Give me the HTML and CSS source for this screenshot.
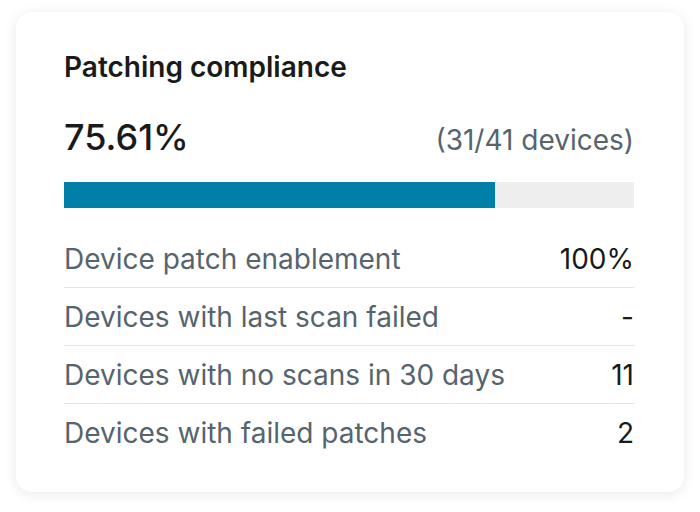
FILE: index.html
```html
<!DOCTYPE html>
<html lang="en">
<head>
  <meta charset="UTF-8">
  <title>Patching compliance</title>
  <link rel="stylesheet" href="styles.css">
</head>
<body>
  <div class="card">
    <h2 class="titulo">Patching compliance</h2>
    <div class="resumen">
      <span class="porcentaje">75.61%</span>
      <span class="dispositivos">(31/41 devices)</span>
    </div>
    <div class="barra"><div class="relleno" style="width: 75.61%"></div></div>
    <div class="filas">
      <div class="fila"><span>Device patch enablement</span><b>100%</b></div>
      <div class="fila"><span>Devices with last scan failed</span><b>-</b></div>
      <div class="fila"><span>Devices with no scans in 30 days</span><b>11</b></div>
      <div class="fila"><span>Devices with failed patches</span><b>2</b></div>
    </div>
  </div>
</body>
</html>
```
FILE: styles.css
```css
body { margin: 0; padding: 12px 16px; background: #fff; font-family: Inter, "Noto Sans", sans-serif; }
.card { width: 668px; height: 480px; box-sizing: border-box; padding: 38px 50px 0 48px; background: #fff; border-radius: 16px; box-shadow: 0 2px 14px rgba(0, 0, 0, 0.09); }
.titulo { margin: 0; font-size: 28px; font-weight: 600; line-height: 34px; color: #1a1a1a; }
.resumen { display: flex; justify-content: space-between; align-items: baseline; margin-top: 31px; }
.porcentaje { font-size: 36px; font-weight: 500; line-height: 44px; color: #1a1a1a; }
.dispositivos { font-size: 28px; line-height: 34px; color: #56646e; }
.barra { height: 26px; margin-top: 23px; background: #eeeeee; }
.relleno { height: 100%; background: #0080a8; }
.filas { margin-top: 22px; }
.fila { display: flex; justify-content: space-between; align-items: center; height: 57px; border-bottom: 1px solid #e1e3e6; font-size: 28px; line-height: 34px; color: #56646e; }
.fila:last-child { border-bottom: none; }
.fila b { font-weight: 400; color: #1a1a1a; }
```
